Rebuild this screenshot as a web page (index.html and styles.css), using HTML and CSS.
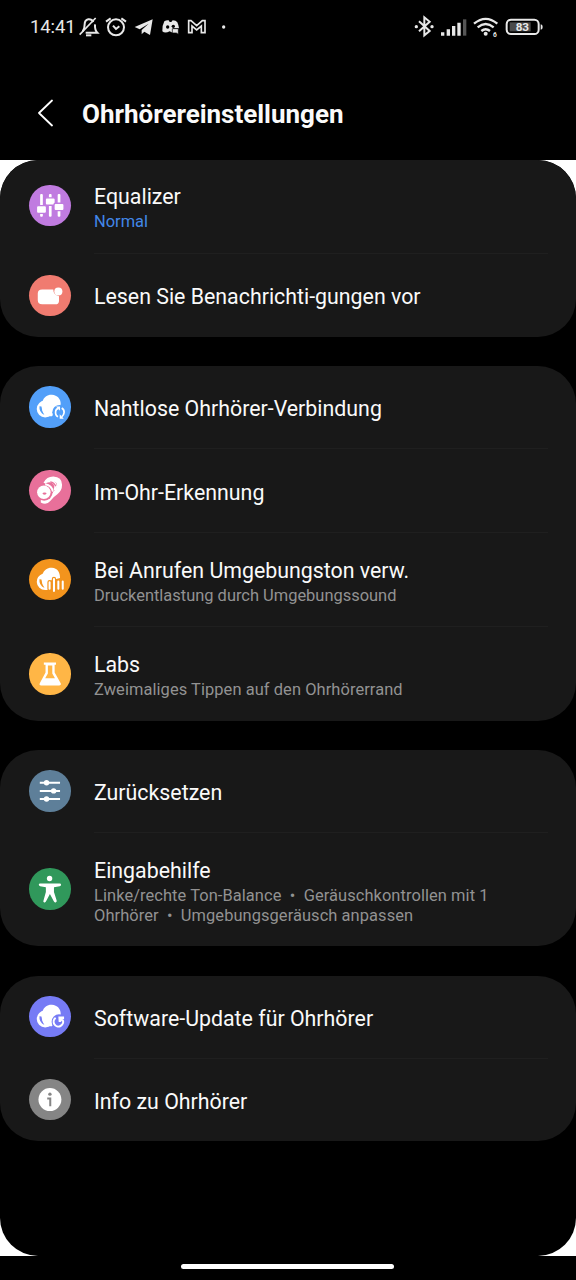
FILE: index.html
```html
<!DOCTYPE html>
<html lang="de">
<head>
<meta charset="utf-8">
<title>Ohrhörereinstellungen</title>
<link rel="stylesheet" href="styles.css">
</head>
<body>
<div class="statusbar">
  <span class="clock">14:41</span>
  <svg class="status-left" width="160" height="24" viewBox="0 0 480 72" fill="none" stroke="#e8e8e8" stroke-width="6">
    <path d="M17 55Q23 48 23 34Q23 21 34 19Q44 18 49 27M54 34Q53 51 61 59H26" />
    <path d="M8 65L56 15" stroke-width="5"/><path d="M27 67h16" stroke-width="6"/>
    <circle cx="117" cy="43" r="24"/><path d="M108 38l9 10l10-8M87 26l14-10M133 16l14 10"/>
    <path d="M173 42L227 19L219 66L202 56L194 64V51L215 32L188 49Z" fill="#e8e8e8" stroke="none"/>
    <path d="M262 25Q268 21 275 22L278 27H283L287 22Q297 22 301 28Q305 37 306 46H288V60L278 55Q264 62 256 55Q255 38 262 25Z" fill="#e8e8e8" stroke="none"/>
    <circle cx="272" cy="42" r="5" fill="#000" stroke="none"/><circle cx="289" cy="40" r="5" fill="#000" stroke="none"/>
    <path d="M286 47h18v17l-6-4h-12Z" fill="#e8e8e8" stroke="#000" stroke-width="2"/>
    <path d="M335 59V23H342L359 38L376 23H384V59H373V39L359 51L345 39V59Z" stroke-width="5"/>
    <circle cx="440" cy="42" r="5" fill="#e8e8e8" stroke="none"/>
  </svg>
  <svg class="status-right" width="136" height="26" viewBox="40 40 408 78" fill="none" stroke="#e8e8e8" stroke-width="6">
    <path d="M58 62L90 91L74 104V50L90 63L58 92"/>
    <circle cx="50" cy="78" r="5" fill="#e8e8e8" stroke="none"/><circle cx="97" cy="78" r="5" fill="#e8e8e8" stroke="none"/>
    <path d="M129 95v10M146 86v19M162 76v29M178 66v39" stroke-width="10"/><path d="M195 56v49" stroke="#555" stroke-width="10"/>
    <path d="M223 69Q258 40 293 69M234 80Q258 60 282 80M245 91Q258 80 271 91" stroke-width="7"/>
    <circle cx="258" cy="99" r="6" fill="#e8e8e8" stroke="none"/>
    <text x="280" y="108" class="wifi-gen">6</text>
    <rect x="321" y="57" width="96" height="43" rx="13" stroke-width="6"/>
    <rect x="330" y="65" width="63" height="27" fill="#4a4a4a" stroke="none"/>
    <path d="M423 71q6 0 6 8t-6 8Z" fill="#e8e8e8" stroke="none"/>
    <text x="368" y="91" class="battery">83</text>
  </svg>
</div>
<header class="header">
  <svg class="back" width="16" height="28" viewBox="0 0 16 28" fill="none" stroke="#fff" stroke-width="1.8" stroke-linecap="round" stroke-linejoin="round"><path d="M15 1.5L2 14L15 26.5"/></svg>
  <h1>Ohrhörereinstellungen</h1>
</header>
<main class="backdrop">
 <div class="page">
  <section class="card c1">
    <div class="row r94 top">
      <svg class="icon purple" viewBox="0 0 123 123" fill="#fff">
        <rect x="33" y="27" width="8" height="67" rx="3"/><rect x="59" y="27" width="8" height="67" rx="3"/><rect x="85" y="27" width="8" height="67" rx="3"/>
        <g stroke="#c07be0" stroke-width="4"><rect x="22" y="61" width="30" height="23" rx="5"/><rect x="48" y="38" width="30" height="22" rx="5"/><rect x="74" y="54" width="30" height="22" rx="5"/></g>
      </svg>
      <div class="text"><b>Equalizer</b><small class="blue">Normal</small></div>
    </div>
    <div class="row r83">
      <svg class="icon coral" viewBox="0 0 123 123" fill="#fff"><path d="M39 43H72Q72 59 89 63V76Q89 87 78 87H39Q26 87 26 75V55Q26 43 39 43Z"/><circle cx="87" cy="49" r="12"/></svg>
      <div class="text lesen"><b>Lesen Sie Benachrichti-gungen vor</b></div>
    </div>
  </section>
  <section class="card c2">
    <div class="row r83">
      <svg class="icon blue-bg" viewBox="0 0 123 123" fill="#fff">
        <ellipse cx="48" cy="68" rx="25" ry="25"/>
        <path d="M31 60Q29 78 46 86Q38 76 37 61Z" fill="#529ff9"/>
        <path d="M40 46C44 32 56 25 68 26C84 27 94 39 94 52C94 63 88 68 80 74L68 90H50Q39 78 39 62Z"/>
        <circle cx="91" cy="78" r="22" fill="#529ff9"/>
        <path d="M86 91Q77 86 79 75Q80 68 87 67M97 65Q105 70 104 79Q103 87 97 91" fill="none" stroke="#fff" stroke-width="5"/><path d="M80 61h12v12ZM91 84v13h12Z"/>
      </svg>
      <div class="text"><b>Nahtlose Ohrhörer-Verbindung</b></div>
    </div>
    <div class="row r84">
      <svg class="icon pink" viewBox="0 0 123 123" fill="#fff">
        <path d="M43 38Q52 19 72 19Q98 20 98 44Q98 62 84 72Q72 80 63 92Q51 106 35 96V88Q55 93 67 71L83 51Q86 34 69 33Q56 31 49 41Z"/>
        <path d="M50 34Q67 28 76 40Q82 49 76 60" fill="none" stroke="#fff" stroke-width="8"/>
        <path d="M63 35Q75 37 79 48" fill="none" stroke="#e8709a" stroke-width="4"/>
        <circle cx="45" cy="66" r="25" fill="#e8709a"/><circle cx="44" cy="66" r="20"/>
        <path d="M48 42Q68 46 71 64" fill="none" stroke="#fff" stroke-width="6"/>
        <ellipse cx="46" cy="70" rx="6" ry="3" fill="#e8709a"/>
      </svg>
      <div class="text"><b>Im-Ohr-Erkennung</b></div>
    </div>
    <div class="row r94">
      <svg class="icon orange" viewBox="0 0 123 123" fill="#fff">
        <path d="M56 44V92H48A25 25 0 0 1 23 68Q23 51 40 44Z"/>
        <path d="M31 60Q29 78 46 86Q38 76 37 61Z" fill="#f3941d"/>
        <path d="M40 46C44 32 56 25 68 26C84 27 92 39 92 56L56 66L54 91Q39 78 39 62Z"/>
        <path d="M61 69v20M74 59v37M87 67v21M100 67v21" stroke="#f3941d" stroke-width="13" stroke-linecap="round"/>
        <path d="M61 69v19M74 59v36M87 67v21M100 67v21" stroke="#fff" stroke-width="6" stroke-linecap="round"/>
      </svg>
      <div class="text"><b>Bei Anrufen Umgebungston verw.</b><small>Druckentlastung durch Umgebungssound</small></div>
    </div>
    <div class="row r94">
      <svg class="icon amber" viewBox="0 0 123 123" fill="#fff">
        <path d="M44 28H80V35H76V58L94 90Q96 96 89 96H36Q29 96 32 90L49 58V35H44Z"/><path d="M56 37H69V61L77 75H48L56 61Z" fill="#ffb646"/>
      </svg>
      <div class="text"><b>Labs</b><small class="labs">Zweimaliges Tippen auf den Ohrhörerrand</small></div>
    </div>
  </section>
  <section class="card c3">
    <div class="row r83">
      <svg class="icon slate" viewBox="0 0 123 123" fill="#fff"><path d="M32 38H92M32 62H92M32 86H92" stroke="#fff" stroke-width="6"/><circle cx="52" cy="38" r="8"/><circle cx="73" cy="62" r="8"/><circle cx="52" cy="86" r="8"/></svg>
      <div class="text"><b>Zurücksetzen</b></div>
    </div>
    <div class="row r113">
      <svg class="icon green" viewBox="0 0 123 123" fill="#fff"><circle cx="61" cy="31" r="8"/><path d="M33 46H91Q95 46 95 50Q95 54 91 54L74 57V71L82 96Q83 101 79 102Q75 103 73 98L62 77L51 98Q49 103 45 102Q41 101 43 96L50 71V57L33 54Q29 53 29 50Q29 46 33 46Z"/></svg>
      <div class="text"><b>Eingabehilfe</b><small class="labs">Linke/rechte Ton-Balance &nbsp;•&nbsp; Geräuschkontrollen mit 1<br>Ohrhörer &nbsp;•&nbsp; Umgebungsgeräusch anpassen</small></div>
    </div>
  </section>
  <section class="card c4">
    <div class="row r83">
      <svg class="icon indigo" viewBox="0 0 123 123" fill="#fff">
        <ellipse cx="48" cy="68" rx="25" ry="25"/>
        <path d="M31 60Q29 78 46 86Q38 76 37 61Z" fill="#767bf5"/>
        <path d="M40 46C44 32 56 25 68 26C84 27 94 39 94 52C94 63 88 68 80 74L68 90H50Q39 78 39 62Z"/>
        <circle cx="89" cy="76" r="22" fill="#767bf5"/><path d="M79 65A14 14 0 1 0 100 71" fill="none" stroke="#fff" stroke-width="6"/><path d="M87 61H104V66L94 77H88Z"/>
      </svg>
      <div class="text"><b>Software-Update für Ohrhörer</b></div>
    </div>
    <div class="row r83">
      <svg class="icon gray" viewBox="0 0 123 123" fill="#fff"><circle cx="62" cy="61" r="34"/><circle cx="62" cy="45" r="5" fill="#858585"/><path d="M54 58H63V81" fill="none" stroke="#858585" stroke-width="6"/></svg>
      <div class="text"><b>Info zu Ohrhörer</b></div>
    </div>
  </section>
 </div>
</main>
<footer class="navbar"><div class="handle"></div></footer>
</body>
</html>
```
FILE: styles.css
```css
* { box-sizing: border-box; }
body { margin: 0; width: 576px; height: 1280px; background: #000; color: #fafafa; font-family: Roboto, sans-serif; overflow: hidden; }
svg { display: block; flex: none; }
.statusbar { height: 53px; padding-left: 30px; display: flex; align-items: center; }
.clock { width: 47px; font-size: 18.5px; color: #e8e8e8; letter-spacing: -.1px; }
.status-left { margin-top: -4px; }
.status-right { margin-left: 176px; }
.wifi-gen { font-size: 20px; font-weight: 700; fill: #e8e8e8; stroke: none; }
.battery { font-size: 35px; font-weight: 700; fill: #e8e8e8; stroke: none; text-anchor: middle; }
.header { height: 107px; padding: 8px 0 0 37px; display: flex; align-items: flex-start; }
.header h1 { margin: 38px 0 0 29px; font-size: 26px; line-height: 30px; font-weight: 700; letter-spacing: -.02px; }
.back { margin-top: 38px; }
.backdrop { height: 1096px; background: #fff; }
.page { height: 1096px; background: #000; border-radius: 38px; overflow: hidden; }
.card { background: #181818; border-radius: 38px; display: flex; flex-direction: column; overflow: hidden; }
.c1 { height: 176.5px; margin-bottom: 29.5px; }
.c2 { height: 354.5px; margin-bottom: 29.5px; }
.c3 { height: 196px; margin-bottom: 29.5px; }
.c4 { height: 165.5px; }
.row { display: flex; align-items: center; padding-left: 29px; flex: none; }
.r83 { height: 83px; }
.r84 { height: 84px; }
.r94 { height: 94.3px; }
.r113 { height: 113px; }
.icon { width: 41.5px; height: 41.5px; border-radius: 50%; margin-top: -1px; }
.text { margin-left: 23.5px; width: 454px; height: 100%; display: flex; flex-direction: column; justify-content: center; padding-top: 4px; }
.row:not(:last-child) .text { border-bottom: 1px solid #1f1f1f; }
.top .icon { margin-top: -3px; }
.top .text { padding-top: 3px; }
.lesen { padding-top: 3px; }
.text b { font-size: 21.35px; line-height: 26px; font-weight: 400; white-space: nowrap; }
.text small { font-size: 16.45px; line-height: 20px; color: #929292; margin-top: 2px; white-space: nowrap; }
.text .labs { letter-spacing: .07px; }
.text .blue { color: #4287e8; }
.purple { background: #c07be0; }
.coral { background: #f07b70; }
.blue-bg { background: #529ff9; }
.pink { background: #e8709a; }
.orange { background: #f3941d; }
.amber { background: #ffb646; }
.slate { background: #5e7f99; }
.green { background: #30985b; }
.indigo { background: #767bf5; }
.gray { background: #858585; }
.navbar { height: 24px; display: flex; justify-content: center; padding: 8px 1px 0 0; }
.handle { width: 213px; height: 5px; border-radius: 3px; background: #fff; }
```
